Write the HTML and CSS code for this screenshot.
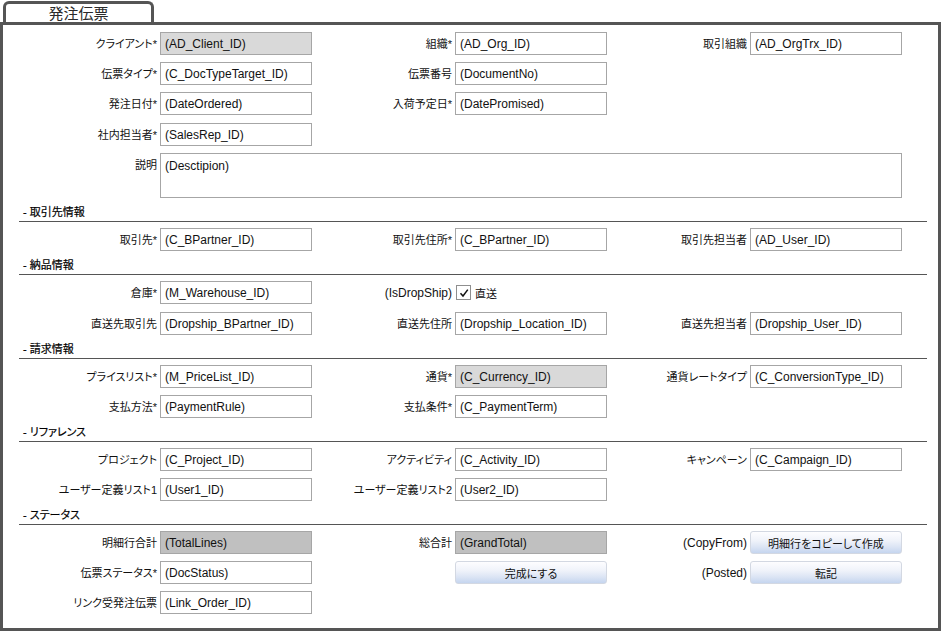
FILE: index.html
```html
<!DOCTYPE html>
<html lang="ja">
<head>
<meta charset="utf-8">
<title>発注伝票</title>
<link rel="stylesheet" href="styles.css">
</head>
<body>
<div class="tab">発注伝票</div>
<div class="frame">
  <div class="row">
    <div class="cell"><span class="label">クライアント*</span><div class="field ro">(AD_Client_ID)</div></div>
    <div class="cell"><span class="label">組織*</span><div class="field">(AD_Org_ID)</div></div>
    <div class="cell"><span class="label">取引組織</span><div class="field">(AD_OrgTrx_ID)</div></div>
  </div>
  <div class="row">
    <div class="cell"><span class="label">伝票タイプ*</span><div class="field">(C_DocTypeTarget_ID)</div></div>
    <div class="cell"><span class="label">伝票番号</span><div class="field">(DocumentNo)</div></div>
  </div>
  <div class="row tall">
    <div class="cell"><span class="label">発注日付*</span><div class="field">(DateOrdered)</div></div>
    <div class="cell"><span class="label">入荷予定日*</span><div class="field">(DatePromised)</div></div>
  </div>
  <div class="row">
    <div class="cell"><span class="label">社内担当者*</span><div class="field">(SalesRep_ID)</div></div>
  </div>
  <div class="row area-row">
    <span class="label top">説明</span><div class="field area">(Desctipion)</div>
  </div>

  <div class="section">- 取引先情報</div>
  <div class="row">
    <div class="cell"><span class="label">取引先*</span><div class="field">(C_BPartner_ID)</div></div>
    <div class="cell"><span class="label">取引先住所*</span><div class="field">(C_BPartner_ID)</div></div>
    <div class="cell"><span class="label">取引先担当者</span><div class="field">(AD_User_ID)</div></div>
  </div>

  <div class="section">- 納品情報</div>
  <div class="row tall">
    <div class="cell"><span class="label">倉庫*</span><div class="field">(M_Warehouse_ID)</div></div>
    <div class="cell"><span class="label en">(IsDropShip)</span>
      <div class="check">
        <span class="box"><svg width="12" height="12" viewBox="0 0 12 12"><path d="M2.5 6.2 L5 9 L9.8 2.6" fill="none" stroke="#111" stroke-width="1.5"/></svg></span>
        <span class="check-text">直送</span>
      </div>
    </div>
  </div>
  <div class="row">
    <div class="cell"><span class="label">直送先取引先</span><div class="field">(Dropship_BPartner_ID)</div></div>
    <div class="cell"><span class="label">直送先住所</span><div class="field">(Dropship_Location_ID)</div></div>
    <div class="cell"><span class="label">直送先担当者</span><div class="field">(Dropship_User_ID)</div></div>
  </div>

  <div class="section">- 請求情報</div>
  <div class="row">
    <div class="cell"><span class="label">プライスリスト*</span><div class="field">(M_PriceList_ID)</div></div>
    <div class="cell"><span class="label">通貨*</span><div class="field ro">(C_Currency_ID)</div></div>
    <div class="cell"><span class="label">通貨レートタイプ</span><div class="field">(C_ConversionType_ID)</div></div>
  </div>
  <div class="row">
    <div class="cell"><span class="label">支払方法*</span><div class="field">(PaymentRule)</div></div>
    <div class="cell"><span class="label">支払条件*</span><div class="field">(C_PaymentTerm)</div></div>
  </div>

  <div class="section">- リファレンス</div>
  <div class="row">
    <div class="cell"><span class="label">プロジェクト</span><div class="field">(C_Project_ID)</div></div>
    <div class="cell"><span class="label">アクティビティ</span><div class="field">(C_Activity_ID)</div></div>
    <div class="cell"><span class="label">キャンペーン</span><div class="field">(C_Campaign_ID)</div></div>
  </div>
  <div class="row">
    <div class="cell"><span class="label">ユーザー定義リスト1</span><div class="field">(User1_ID)</div></div>
    <div class="cell"><span class="label">ユーザー定義リスト2</span><div class="field">(User2_ID)</div></div>
  </div>

  <div class="section">- ステータス</div>
  <div class="row">
    <div class="cell"><span class="label">明細行合計</span><div class="field total">(TotalLines)</div></div>
    <div class="cell"><span class="label">総合計</span><div class="field total">(GrandTotal)</div></div>
    <div class="cell"><span class="label en">(CopyFrom)</span><button class="btn">明細行をコピーして作成</button></div>
  </div>
  <div class="row">
    <div class="cell"><span class="label">伝票ステータス*</span><div class="field">(DocStatus)</div></div>
    <div class="cell"><span class="label"></span><button class="btn">完成にする</button></div>
    <div class="cell"><span class="label en">(Posted)</span><button class="btn">転記</button></div>
  </div>
  <div class="row">
    <div class="cell"><span class="label">リンク受発注伝票</span><div class="field">(Link_Order_ID)</div></div>
  </div>
</div>
</body>
</html>
```

FILE: styles.css
```css
* { box-sizing: border-box; }

html, body {
  margin: 0;
  padding: 0;
  width: 941px;
  height: 631px;
  overflow: hidden;
  background: #ffffff;
  font-family: "Liberation Sans", "Noto Sans CJK JP", sans-serif;
  font-size: 12px;
  color: #111;
  font-feature-settings: "palt";
}

.tab {
  margin: 1px 0 0 3px;
  width: 151px;
  height: 21px;
  border: 3px solid #555;
  border-bottom: none;
  border-radius: 6px 6px 0 0;
  background: #fff;
  text-align: center;
  font-family: "Noto Sans CJK JP", sans-serif;
  font-size: 15px;
  line-height: 18px;
  color: #2a2a2a;
}

.frame {
  width: 941px;
  height: 609px;
  border: 3px solid #555;
  padding: 7px 13px 0 13px;
  display: flex;
  flex-direction: column;
  gap: 7px;
}

.row {
  display: grid;
  grid-template-columns: repeat(3, 295px);
  height: 23px;
  padding-left: 1px;
}
.row.tall { margin-bottom: 1px; }

.cell {
  display: flex;
  align-items: center;
  gap: 3px;
}

.label {
  width: 140px;
  flex: none;
  text-align: right;
  white-space: nowrap;
  font-size: 11px;
  line-height: 14px;
}
.label.en { font-size: 12px; }

.field {
  width: 152px;
  height: 23px;
  flex: none;
  border: 1px solid #a6a6a6;
  background: #fff;
  padding: 0 4px;
  line-height: 22px;
  white-space: nowrap;
  overflow: hidden;
  color: #111;
}
.field.ro { background: #d9d9d9; }
.field.total { background: #c0c0c0; }

.area-row {
  display: flex;
  height: 45px;
  gap: 3px;
  align-items: flex-start;
}
.label.top { padding-top: 5px; }
.field.area {
  width: 742px;
  height: 45px;
  line-height: 14px;
  padding-top: 5px;
}

.section {
  height: 17px;
  margin: 0 0 -1px 3px;
  width: 908px;
  border-bottom: 1px solid #555;
  padding-left: 4px;
  font-size: 11px;
  line-height: 15px;
  color: #000;
  -webkit-text-stroke: 0.2px #000;
}

.check {
  display: flex;
  align-items: center;
  gap: 4px;
  margin-left: 1px;
}
.box {
  width: 15px;
  height: 15px;
  border: 1px solid #8f8f8f;
  background: #fff;
  display: flex;
  align-items: center;
  justify-content: center;
}
.box svg { display: block; }
.check-text { font-size: 11px; }

.btn {
  width: 152px;
  height: 23px;
  flex: none;
  margin: 0;
  padding: 0;
  border: 1px solid #d3d8e2;
  border-radius: 3px;
  background: linear-gradient(to bottom, #fdfdff 0%, #f0f3fa 40%, #dbe4f4 72%, #c5d5ef 100%);
  font-family: "Liberation Sans", "Noto Sans CJK JP", sans-serif;
  font-size: 11px;
  color: #111;
  font-feature-settings: "palt";
  text-align: center;
}
```
